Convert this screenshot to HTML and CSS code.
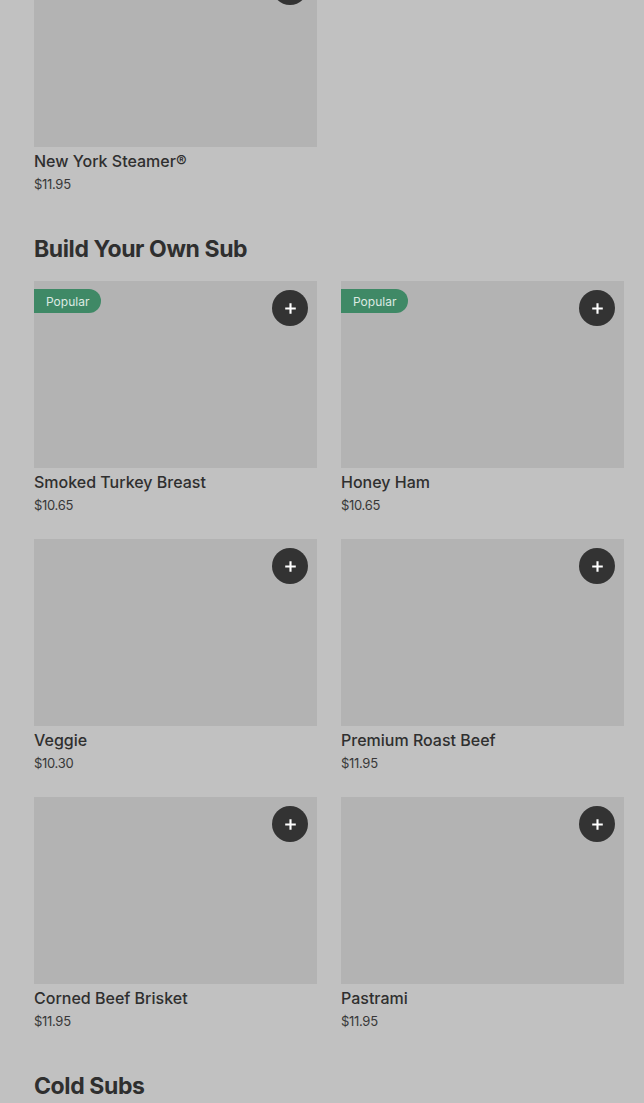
FILE: index.html
```html
<!DOCTYPE html>
<html lang="en">
<head>
<meta charset="utf-8">
<title>Menu</title>
<link rel="stylesheet" href="styles.css">
</head>
<body>
<main class="page">
  <section class="section section-first">
    <div class="grid">
      <article class="card">
        <div class="thumb">
          <button class="add" aria-label="Add"><svg viewBox="0 0 16 16" width="13" height="13"><path d="M8 1.5v13M1.5 8h13" stroke="#fff" stroke-width="2.6" stroke-linecap="butt"/></svg></button>
        </div>
        <div class="info"><h3 class="name">New York Steamer®</h3><p class="price">$11.95</p></div>
      </article>
    </div>
  </section>

  <section class="section">
    <h2 class="heading">Build Your Own Sub</h2>
    <div class="grid">
      <article class="card">
        <div class="thumb">
          <span class="badge">Popular</span>
          <button class="add" aria-label="Add"><svg viewBox="0 0 16 16" width="13" height="13"><path d="M8 1.5v13M1.5 8h13" stroke="#fff" stroke-width="2.6" stroke-linecap="butt"/></svg></button>
        </div>
        <div class="info"><h3 class="name">Smoked Turkey Breast</h3><p class="price">$10.65</p></div>
      </article>
      <article class="card">
        <div class="thumb">
          <span class="badge">Popular</span>
          <button class="add" aria-label="Add"><svg viewBox="0 0 16 16" width="13" height="13"><path d="M8 1.5v13M1.5 8h13" stroke="#fff" stroke-width="2.6" stroke-linecap="butt"/></svg></button>
        </div>
        <div class="info"><h3 class="name">Honey Ham</h3><p class="price">$10.65</p></div>
      </article>
      <article class="card">
        <div class="thumb">
          <button class="add" aria-label="Add"><svg viewBox="0 0 16 16" width="13" height="13"><path d="M8 1.5v13M1.5 8h13" stroke="#fff" stroke-width="2.6" stroke-linecap="butt"/></svg></button>
        </div>
        <div class="info"><h3 class="name">Veggie</h3><p class="price">$10.30</p></div>
      </article>
      <article class="card">
        <div class="thumb">
          <button class="add" aria-label="Add"><svg viewBox="0 0 16 16" width="13" height="13"><path d="M8 1.5v13M1.5 8h13" stroke="#fff" stroke-width="2.6" stroke-linecap="butt"/></svg></button>
        </div>
        <div class="info"><h3 class="name">Premium Roast Beef</h3><p class="price">$11.95</p></div>
      </article>
      <article class="card">
        <div class="thumb">
          <button class="add" aria-label="Add"><svg viewBox="0 0 16 16" width="13" height="13"><path d="M8 1.5v13M1.5 8h13" stroke="#fff" stroke-width="2.6" stroke-linecap="butt"/></svg></button>
        </div>
        <div class="info"><h3 class="name">Corned Beef Brisket</h3><p class="price">$11.95</p></div>
      </article>
      <article class="card">
        <div class="thumb">
          <button class="add" aria-label="Add"><svg viewBox="0 0 16 16" width="13" height="13"><path d="M8 1.5v13M1.5 8h13" stroke="#fff" stroke-width="2.6" stroke-linecap="butt"/></svg></button>
        </div>
        <div class="info"><h3 class="name">Pastrami</h3><p class="price">$11.95</p></div>
      </article>
    </div>
  </section>

  <section class="section">
    <h2 class="heading">Cold Subs</h2>
  </section>
</main>
</body>
</html>
```

FILE: styles.css
```css
html, body {
  margin: 0;
  padding: 0;
  background: #c1c1c1;
  overflow: hidden;
}

body {
  font-family: "Inter", "Liberation Sans", sans-serif;
  color: #2f2f2f;
}

.page {
  padding: 0 20px 0 34px;
  display: flex;
  flex-direction: column;
  gap: 39px;
}

.section-first {
  margin-top: -40px;
}

.heading {
  margin: 0 0 16px;
  font-size: 23px;
  line-height: 32px;
  font-weight: 700;
  letter-spacing: -0.4px;
  color: #2f2f2f;
}

.grid {
  display: grid;
  grid-template-columns: 283px 283px;
  column-gap: 24px;
  row-gap: 24px;
}

.card {
  display: flex;
  flex-direction: column;
}

.thumb {
  position: relative;
  height: 187px;
  background: #b3b3b3;
}

.add {
  position: absolute;
  top: 9px;
  right: 9px;
  width: 36px;
  height: 36px;
  border: 0;
  padding: 0;
  border-radius: 50%;
  background: #333333;
  display: flex;
  align-items: center;
  justify-content: center;
}

.badge {
  position: absolute;
  top: 8px;
  left: 0;
  height: 24px;
  padding: 0 12px;
  display: flex;
  align-items: center;
  background: #3f8966;
  color: #dde9e2;
  font-size: 12px;
  border-radius: 0 12px 12px 0;
}

.info {
  padding-top: 3px;
}

.name {
  margin: 0;
  font-size: 16px;
  line-height: 22px;
  font-weight: 500;
  color: #2f2f2f;
}

.price {
  margin: 2px 0 0;
  font-size: 13px;
  line-height: 20px;
  color: #383838;
  letter-spacing: -0.3px;
}
```
